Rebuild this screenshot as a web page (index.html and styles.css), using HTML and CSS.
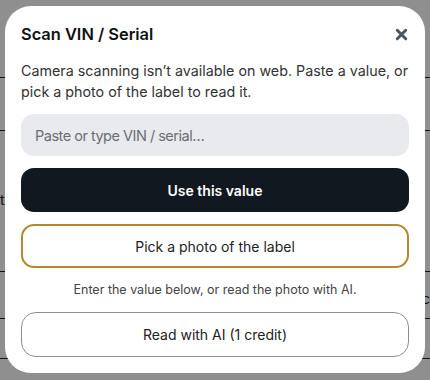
FILE: index.html
```html
<!DOCTYPE html>
<html>
<head>
<meta charset="utf-8">
<link rel="stylesheet" href="styles.css">
</head>
<body>
<div class="page">
  <div class="row r1"></div>
  <div class="row r2"></div>
  <div class="row r3"><span class="under-left">t</span></div>
  <div class="row r4"><span class="under-right">c</span></div>
  <div class="row r5"></div>
</div>
<div class="overlay">
  <div class="modal">
    <div class="header">
      <h2 class="title">Scan VIN / Serial</h2>
      <button class="close" aria-label="Close">
        <svg width="13" height="13" viewBox="0 0 13 13"><path d="M2.3 2.3 L10.7 10.7 M10.7 2.3 L2.3 10.7" stroke="#4b5563" stroke-width="3" stroke-linecap="round"/></svg>
      </button>
    </div>
    <p class="desc">Camera scanning isn’t available on web. Paste a value, or pick a photo of the label to read it.</p>
    <input class="field" type="text" placeholder="Paste or type VIN / serial…">
    <button class="btn primary">Use this value</button>
    <button class="btn gold">Pick a photo of the label</button>
    <p class="hint">Enter the value below, or read the photo with AI.</p>
    <button class="btn outline">Read with AI (1 credit)</button>
  </div>
</div>
</body>
</html>
```
FILE: styles.css
```css
* { box-sizing: border-box; }
html, body { margin: 0; padding: 0; }
body {
  width: 430px;
  height: 380px;
  overflow: hidden;
  background: #fff;
  font-family: Inter, "Noto Sans", sans-serif;
  position: relative;
}
.page { display: flex; flex-direction: column; }
.row { border-bottom: 1px solid #222; position: relative; }
.r1 { height: 78px; }
.r2 { height: 53px; }
.r3 { height: 141px; }
.r4 { height: 47px; }
.r5 { height: 40px; }
.under-left { position: absolute; left: 0; top: 60px; font-size: 14px; color: #222; }
.under-right { position: absolute; right: 0; top: 18px; font-size: 14px; color: #222; }
.overlay {
  position: absolute;
  inset: 0;
  background: rgba(0,0,0,0.44);
  padding: 6px 5px 7px;
}
.modal {
  background: #fff;
  border-radius: 26px;
  padding: 16px;
  display: flex;
  flex-direction: column;
  gap: 12px;
  height: 367px;
}
.header {
  display: flex;
  align-items: center;
  justify-content: space-between;
  height: 24px;
}
.title {
  margin: 0;
  font-size: 16.4px;
  font-weight: 600;
  color: #111;
}
.close {
  border: 0;
  background: none;
  padding: 0;
  margin-right: 1px;
  width: 13px;
  height: 13px;
  display: flex;
}
.desc {
  margin: 2px 0 0;
  font-size: 14.3px;
  line-height: 21px;
  color: #333;
}
.field {
  height: 42px;
  border: 0;
  border-radius: 13px;
  background: #e9eaee;
  padding: 0 14px;
  font-family: inherit;
  font-size: 14.5px;
  letter-spacing: -0.5px;
  color: #222;
  outline: none;
}
.field::placeholder { color: #6b6e73; }
.btn {
  font-family: inherit;
  font-size: 14px;
  border-radius: 13px;
  cursor: pointer;
}
.primary {
  height: 44px;
  border: 0;
  background: #111820;
  color: #fff;
  font-weight: 600;
}
.gold {
  height: 44px;
  background: #fff;
  border: 2px solid #b8862b;
  color: #222;
}
.hint {
  margin: 0;
  text-align: center;
  font-size: 12.5px;
  line-height: 20px;
  color: #444;
}
.outline {
  height: 45px;
  background: #fff;
  border: 1px solid #8d8d8d;
  color: #222;
  border-radius: 15px;
}
```
